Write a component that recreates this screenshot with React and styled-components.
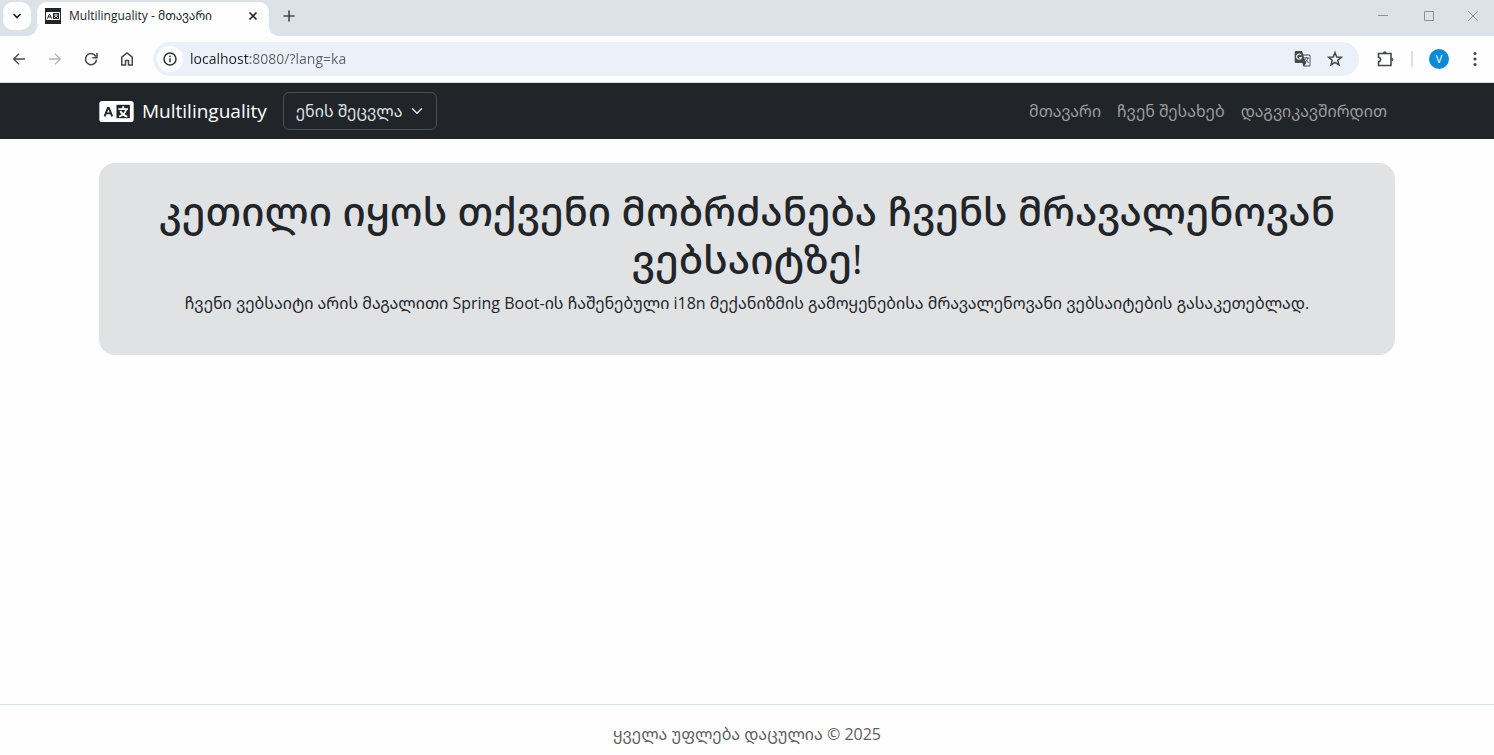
import React, { useState } from "react";
import styled, { createGlobalStyle } from "styled-components";

const fonts = `"Open Sans", "Noto Sans Georgian", "DejaVu Sans", sans-serif`;

const GlobalStyle = createGlobalStyle`
  *, *::before, *::after { box-sizing: border-box; }
  html, body, #root { height: 100%; }
  body {
    margin: 0;
    background: #fefefe;
    color: #212529;
    font-family: ${fonts};
    font-size: 16px;
    line-height: 24px;
  }
  button, input, select { font: inherit; }
`;

const Page = styled.div`
  display: flex;
  flex-direction: column;
  min-height: 100%;
`;

/* Browser window */

const TabStrip = styled.div`
  display: flex;
  height: 36px;
  background: #dde1e8;
`;

const IconButton = styled.button`
  display: flex;
  align-items: center;
  justify-content: center;
  flex: none;
  width: ${(p) => p.$width || 28}px;
  height: 28px;
  padding: 0;
  border: 0;
  border-radius: 10px;
  background: ${(p) => p.$fill || "transparent"};
  color: ${(p) => p.$color || "#45484b"};
`;

const TabSearch = styled(IconButton)`
  margin: 2px 6px 0 3px;
`;

const Tab = styled.div`
  position: relative;
  display: flex;
  align-items: center;
  width: 232px;
  margin-top: 2px;
  padding: 0 6px 6px 8px;
  border-radius: 10px 10px 0 0;
  background: #fefefe;
  font-size: 12px;
  line-height: 16px;

  &::before, &::after {
    content: "";
    position: absolute;
    bottom: 0;
    width: 10px;
    height: 10px;
  }
  &::before {
    right: 100%;
    background: radial-gradient(circle at 0 0, transparent 10px, #fefefe 10px);
  }
  &::after {
    left: 100%;
    background: radial-gradient(circle at 100% 0, transparent 10px, #fefefe 10px);
  }
`;

const TabTitle = styled.span`
  flex: 1;
  margin-left: 8px;
  white-space: nowrap;
`;

const TabClose = styled(IconButton)`
  width: 20px;
  height: 20px;
`;

const NewTab = styled(IconButton)`
  margin: 2px 0 0 6px;
`;

const WindowControls = styled.div`
  display: flex;
  margin-left: auto;
  padding-top: 2px;
`;

const Toolbar = styled.div`
  display: flex;
  align-items: center;
  height: 47px;
  padding: 0 5px;
  border-bottom: 1px solid #dadce0;
  background: #fefefe;
`;

const NavButtons = styled.div`
  display: flex;
  gap: 8px;
  margin-right: 12px;
`;

const AddressBar = styled.div`
  display: flex;
  align-items: center;
  flex: 1;
  height: 34px;
  padding: 0 10px 0 4px;
  border-radius: 17px;
  background: #ebf0f9;
`;

const SiteInfo = styled(IconButton)`
  width: 26px;
  height: 26px;
  border-radius: 50%;
`;

const Address = styled.input`
  flex: 1;
  min-width: 0;
  height: 24px;
  margin-left: 7px;
  padding: 0;
  border: 0;
  outline: 0;
  background: linear-gradient(90deg, #1f2023 60px, #5c6166 60px);
  background-clip: text;
  -webkit-text-fill-color: transparent;
  font-size: 14px;
`;

const AddressActions = styled.div`
  display: flex;
  gap: 4px;
`;

const ToolbarActions = styled.div`
  display: flex;
  align-items: center;
  margin-left: 12px;
`;

const Separator = styled.span`
  width: 2px;
  height: 16px;
  margin: 0 16px 0 12px;
  background: #d8e0ec;
`;

const Avatar = styled.button`
  width: 20px;
  height: 20px;
  margin-right: 12px;
  padding: 0;
  border: 0;
  border-radius: 50%;
  background: #0a8bd3;
  color: #fff;
  font-size: 11px;
  line-height: 20px;
`;

/* Site */

const Navbar = styled.header`
  background: #212529;
`;

const Container = styled.div`
  width: 100%;
  max-width: 1320px;
  margin: 0 auto;
  padding: 0 12px;
`;

const NavbarInner = styled(Container)`
  display: flex;
  align-items: center;
  min-height: 56px;
`;

const Brand = styled.a`
  display: flex;
  align-items: center;
  gap: 8px;
  margin-right: 16px;
  color: #fff;
  font-size: 19px;
  line-height: 30px;
  text-decoration: none;
`;

const SelectBox = styled.div`
  position: relative;
  width: 154px;

  svg {
    position: absolute;
    top: 13px;
    right: 14px;
    pointer-events: none;
  }
`;

const Select = styled.select`
  display: block;
  width: 100%;
  height: 38px;
  padding: 0 34px 0 12px;
  border: 1px solid #495057;
  border-radius: 6px;
  appearance: none;
  background: #212529;
  color: #dee2e6;
`;

const Menu = styled.nav`
  display: flex;
  margin-left: auto;
`;

const MenuLink = styled.a`
  padding: 8px;
  color: #9b9d9f;
  text-decoration: none;
`;

const Main = styled.main`
  flex: 1;
  padding: 24px 0;
`;

const Hero = styled.section`
  padding: 24px;
  border-radius: 16px;
  background: #e1e2e4;
  text-align: center;
`;

const Title = styled.h1`
  margin: 0 0 8px;
  font-size: 40px;
  font-weight: 500;
  line-height: 48px;
`;

const Lead = styled.p`
  margin: 0 0 16px;
`;

const Footer = styled.footer`
  padding: 17px 12px 9px;
  border-top: 1px solid #dbe0e5;
  color: #5b5f62;
  text-align: center;
`;

/* Drawings */

const Glyph = ({ size = 18, box = 24, width = 2, children, ...rest }) => (
  <svg
    width={size}
    height={size}
    viewBox={`0 0 ${box} ${box}`}
    fill="none"
    stroke="currentColor"
    strokeWidth={width}
    aria-hidden="true"
    {...rest}
  >
    {children}
  </svg>
);

const Logo = ({ width, height, paper, ink }) => (
  <svg width={width} height={height} viewBox="0 0 36 22" aria-hidden="true">
    <rect width="36" height="22" rx="3" fill={paper} />
    <path d="M5.500 16 9 7.200h1L13.500 16M7 13h5" fill="none" stroke={ink} strokeWidth="2" />
    <rect x="18" y="4" width="14" height="14" fill={ink} />
    <path
      d="M25 5.500v3M20 8.500h10M28 9c-.8 3.500-3.500 6-7.300 7.300M22 10.500c1.500 3 4 5 7.300 5.800"
      fill="none"
      stroke={paper}
      strokeWidth="2"
    />
  </svg>
);

export default function App() {
  const [url, setUrl] = useState("localhost:8080/?lang=ka");

  return (
    <Page>
      <GlobalStyle />
      <TabStrip>
        <TabSearch $fill="#fefefe" $color="#202124" aria-label="Search tabs">
          <Glyph size={10} box={10} width={1.7}><path d="m1.500 3 3.500 3.500L8.500 3" /></Glyph>
        </TabSearch>
        <Tab>
          <svg width="16" height="16" viewBox="0 0 16 16" aria-hidden="true">
            <rect width="16" height="16" fill="#212529" />
            <rect x="1" y="4" width="14" height="8" rx="1" fill="#fff" />
            <path d="m2.500 10.500 1.700-4h.6l1.700 4M3.300 9h2.500" fill="none" stroke="#212529" />
            <rect x="8" y="5" width="6" height="6" fill="#212529" />
            <path d="M9 7h4M11 6v1.500L9.500 10M11 8l2 2" fill="none" stroke="#fff" strokeWidth=".8" />
          </svg>
          <TabTitle>Multilinguality - მთავარი</TabTitle>
          <TabClose $color="#202124" aria-label="Close tab">
            <Glyph size={10} box={10} width={1.6}><path d="m1.500 1.500 7 7M8.500 1.500l-7 7" /></Glyph>
          </TabClose>
        </Tab>
        <NewTab aria-label="New tab">
          <Glyph size={12} box={12} width={1.6}><path d="M6 .5v11M.5 6h11" /></Glyph>
        </NewTab>
        <WindowControls>
          <IconButton $width={46} $color="#879297" aria-label="Minimize">
            <Glyph size={10} box={10} width={1}><path d="M0 4.500h10" /></Glyph>
          </IconButton>
          <IconButton $width={46} $color="#879297" aria-label="Maximize">
            <Glyph size={10} box={10} width={1}><path d="M.5.5h9v9h-9z" /></Glyph>
          </IconButton>
          <IconButton $width={42} $color="#879297" aria-label="Close window">
            <Glyph size={10} box={10} width={1}><path d="m0 0 10 10M10 0 0 10" /></Glyph>
          </IconButton>
        </WindowControls>
      </TabStrip>

      <Toolbar>
        <NavButtons>
          <IconButton aria-label="Back">
            <Glyph size={16}><path d="M21 12H4M12 4l-8 8 8 8" /></Glyph>
          </IconButton>
          <IconButton $color="#b4b6b8" aria-label="Forward">
            <Glyph size={16}><path d="M3 12h17M12 4l8 8-8 8" /></Glyph>
          </IconButton>
          <IconButton aria-label="Reload">
            <Glyph size={16} width={2.3}>
              <path d="M19.500 8.500A8.300 8.300 0 1 0 20.300 13" />
              <path d="M21 3v7h-7" />
            </Glyph>
          </IconButton>
          <IconButton aria-label="Home">
            <Glyph><path d="M5 20V9.500L12 4l7 5.500V20h-5v-6h-4v6z" /></Glyph>
          </IconButton>
        </NavButtons>
        <AddressBar>
          <SiteInfo $fill="#fefefe" $color="#303336" aria-label="View site information">
            <Glyph size={16} box={16} width={1.5}>
              <circle cx="8" cy="8" r="6" />
              <path d="M8 7.200v4M8 4.600v1.500" />
            </Glyph>
          </SiteInfo>
          <Address
            aria-label="Address"
            value={url}
            spellCheck={false}
            onChange={(e) => setUrl(e.target.value)}
          />
          <AddressActions>
            <IconButton aria-label="Translate this page">
              <svg width="18" height="18" viewBox="0 0 18 18" fill="none" aria-hidden="true">
                <path d="M2 1h6l1.200 3.500H15A1.500 1.500 0 0 1 16.500 6v9a1.500 1.500 0 0 1-1.500 1.500H9.500L8.300 13H2A1.300 1.300 0 0 1 .7 11.700V2.300A1.300 1.300 0 0 1 2 1z" fill="#45484b" />
                <path d="M9.400 5.500H15a.6.6 0 0 1 .6.6V15a.6.6 0 0 1-.6.6h-4.500L12 13z" fill="#ebf0f9" />
                <path d="M7.200 5.300a2.500 2.500 0 1 0 .2 2.200H5.200" stroke="#ebf0f9" strokeWidth="1.200" />
                <path d="M10.300 8h4.500M12.500 7v1M14 8c-.5 2-1.500 3-2.800 4M11.500 9.500l3 3.500M9.300 13h2.400l-2.200 2.600" stroke="#45484b" />
              </svg>
            </IconButton>
            <IconButton aria-label="Bookmark this tab">
              <Glyph size={18} width={2}>
                <path d="m12 3.500 2.300 5.800 6.200.4-4.800 4 1.600 6.100-5.300-3.400-5.300 3.400 1.600-6.100-4.800-4 6.200-.4z" />
              </Glyph>
            </IconButton>
          </AddressActions>
        </AddressBar>
        <ToolbarActions>
          <IconButton aria-label="Extensions">
            <Glyph size={18} box={18} width={1.6}>
              <path d="M2.500 3.500H15v12H2.500v-3.700c2.800-.5 2.800-4 0-4.500z" />
              <path d="M7 3a1.800 1.800 0 0 1 3.600 0zM15.500 7.700a1.800 1.800 0 0 1 0 3.600z" fill="currentColor" stroke="none" />
            </Glyph>
          </IconButton>
          <Separator />
          <Avatar aria-label="Profile">V</Avatar>
          <IconButton aria-label="Menu">
            <Glyph size={18} box={18}>
              <g fill="currentColor" stroke="none">
                <circle cx="9" cy="3.500" r="1.600" />
                <circle cx="9" cy="9" r="1.600" />
                <circle cx="9" cy="14.500" r="1.600" />
              </g>
            </Glyph>
          </IconButton>
        </ToolbarActions>
      </Toolbar>

      <Navbar>
        <NavbarInner>
          <Brand href="#home">
            <Logo width={35} height={21} paper="#fff" ink="#212529" />
            Multilinguality
          </Brand>
          <SelectBox>
            <Select aria-label="ენის შეცვლა">
              <option>ენის შეცვლა</option>
            </Select>
            <Glyph size={12} box={16} width={2} stroke="#dee2e6"><path d="m2 5 6 6 6-6" strokeLinecap="round" strokeLinejoin="round" /></Glyph>
          </SelectBox>
          <Menu>
            <MenuLink href="#home">მთავარი</MenuLink>
            <MenuLink href="#about">ჩვენ შესახებ</MenuLink>
            <MenuLink href="#contact">დაგვიკავშირდით</MenuLink>
          </Menu>
        </NavbarInner>
      </Navbar>

      <Main>
        <Container>
          <Hero>
            <Title>კეთილი იყოს თქვენი მობრძანება ჩვენს მრავალენოვან ვებსაიტზე!</Title>
            <Lead>
              ჩვენი ვებსაიტი არის მაგალითი Spring Boot-ის ჩაშენებული i18n მექანიზმის გამოყენებისა
              მრავალენოვანი ვებსაიტების გასაკეთებლად.
            </Lead>
          </Hero>
        </Container>
      </Main>

      <Footer>ყველა უფლება დაცულია © 2025</Footer>
    </Page>
  );
}
